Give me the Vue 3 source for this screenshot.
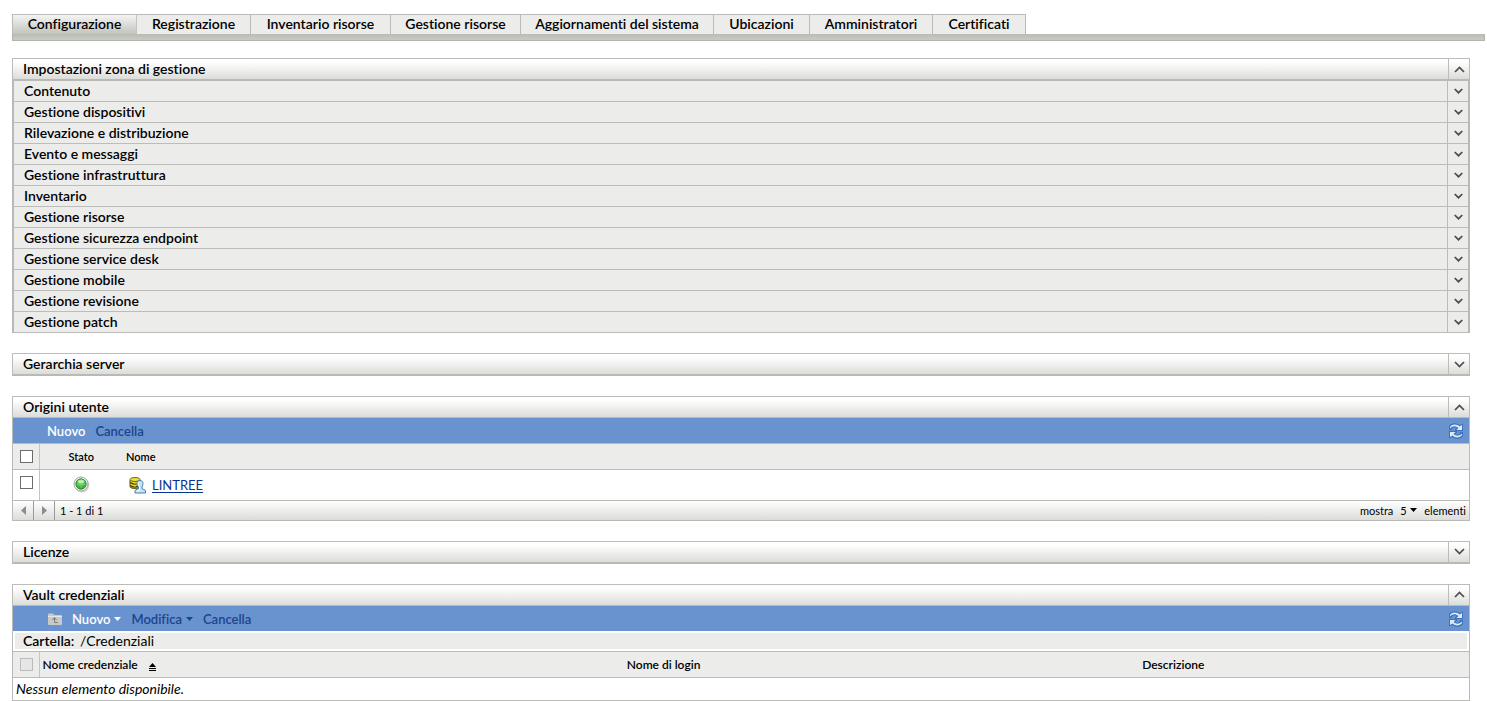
<script setup>
import { ref } from 'vue'

const tabs = [
  'Configurazione',
  'Registrazione',
  'Inventario risorse',
  'Gestione risorse',
  'Aggiornamenti del sistema',
  'Ubicazioni',
  'Amministratori',
  'Certificati',
]
const activeTab = ref('Configurazione')

const settings = [
  'Contenuto',
  'Gestione dispositivi',
  'Rilevazione e distribuzione',
  'Evento e messaggi',
  'Gestione infrastruttura',
  'Inventario',
  'Gestione risorse',
  'Gestione sicurezza endpoint',
  'Gestione service desk',
  'Gestione mobile',
  'Gestione revisione',
  'Gestione patch',
]
const pageSize = ref('5')
</script>

<template>
  <main class="page">
    <nav class="tabs" aria-label="Sezioni">
      <button
        v-for="tab in tabs"
        :key="tab"
        type="button"
        class="tab"
        :class="{ active: tab === activeTab }"
        @click="activeTab = tab"
      >{{ tab }}</button>
    </nav>
    <div class="tab-bar"></div>

    <div class="panels">
      <section>
        <header class="panel-head">
          <h2>Impostazioni zona di gestione</h2>
          <button type="button" class="toggle" aria-label="Comprimi">
            <svg width="11" height="7" viewBox="0 0 11 7"><path d="M1 6 5.500 1.500 10 6" /></svg>
          </button>
        </header>
        <ul class="settings">
          <li v-for="item in settings" :key="item">
            <h3>{{ item }}</h3>
            <button type="button" class="toggle" aria-label="Espandi">
              <svg width="9" height="6" viewBox="0 0 9 6"><path d="M.7 1 4.500 4.700 8.300 1" /></svg>
            </button>
          </li>
        </ul>
      </section>

      <section>
        <header class="panel-head">
          <h2>Gerarchia server</h2>
          <button type="button" class="toggle" aria-label="Espandi">
            <svg width="11" height="7" viewBox="0 0 11 7"><path d="M1 1 5.500 5.500 10 1" /></svg>
          </button>
        </header>
      </section>

      <section>
        <header class="panel-head open">
          <h2>Origini utente</h2>
          <button type="button" class="toggle" aria-label="Comprimi">
            <svg width="11" height="7" viewBox="0 0 11 7"><path d="M1 6 5.500 1.500 10 6" /></svg>
          </button>
        </header>
        <div class="panel-body">
          <div class="toolbar sources-bar">
            <button type="button" class="action enabled">Nuovo</button>
            <button type="button" class="action">Cancella</button>
            <button type="button" class="refresh" aria-label="Aggiorna">
              <svg width="14" height="16" viewBox="0 0 14 16">
                <path class="arrow-shade" d="M0 3C2-.5 8-.5 10.500 2L14 .5V8H6V6L8 5C6 3.500 3.500 4.500 2 7.500L0 7Z" />
                <path class="arrow" d="M1 4C3 .8 8 .8 10.500 3.500L13 2V7H7.500L9.500 5C6.500 2.500 3.500 3 1 5.500Z" />
                <path class="arrow-shade" d="M14 13C12 16.500 6 16.500 3.500 14L0 15.500V8H8V10L6 11C8 12.500 10.500 11.500 12 8.500L14 9Z" />
                <path class="arrow" d="M13 12C11 15.200 6 15.200 3.500 12.500L1 14V9H6.500L4.500 11C7.500 13.500 10.500 13 13 10.500Z" />
              </svg>
            </button>
          </div>
          <table class="grid sources">
            <thead>
              <tr>
                <th class="check"><input type="checkbox" aria-label="Seleziona tutto" /></th>
                <th class="state">Stato</th>
                <th class="name">Nome</th>
              </tr>
            </thead>
            <tbody>
              <tr>
                <td class="check"><input type="checkbox" aria-label="Seleziona LINTREE" /></td>
                <td class="state">
                  <svg width="17" height="17" viewBox="0 0 17 17" role="img" aria-label="Attivo">
                    <defs>
                      <radialGradient id="led" cx=".5" cy=".25" r=".75">
                        <stop offset="0" stop-color="#c4f5b8" />
                        <stop offset=".4" stop-color="#5fc85c" />
                        <stop offset="1" stop-color="#2fa035" />
                      </radialGradient>
                    </defs>
                    <circle cx="9" cy="9" r="7.500" fill="#d4d4d4" />
                    <circle cx="8" cy="8" r="7" fill="#fff" stroke="#9da39d" />
                    <circle cx="8" cy="8" r="5.200" fill="url(#led)" stroke="#2c9036" />
                    <ellipse cx="8" cy="5.500" rx="3" ry="1.500" fill="#d4f8cb" opacity=".8" />
                    <path d="M4 8.500h8M8 4v8" stroke="#8be57d" opacity=".5" />
                  </svg>
                </td>
                <td class="name">
                  <div class="source">
                    <svg width="17" height="17" viewBox="0 0 17 17" aria-hidden="true">
                      <path d="M1 3v7c1.500 2 9 2 10 0V3Z" fill="#c9b90c" stroke="#5a560f" />
                      <path d="M1.500 5.500c3 2 6 2 9 0M1.500 8.500c3 2 6 2 9 0" fill="none" stroke="#302f08" stroke-width="1.200" />
                      <path d="M2 4.500c2 1.500 4 1.700 6 1.500M2 7.500c2 1.500 4 1.500 5 1.400" fill="none" stroke="#f5eb3e" />
                      <ellipse cx="6" cy="2.500" rx="5" ry="2" fill="#eee33a" stroke="#70670b" />
                      <path d="M11 3.500C8 3.500 7.500 6 8.500 8.500L9.500 10V11.500L6 13.500V16H16.500V13.500L13 11.500V10C14.500 7 14.500 3.500 11 3.500Z" fill="#c5e2f8" stroke="#477fae" />
                      <path d="M9.500 5.500c-.8 1 0 3 1 4.500v3l-3 1.500" fill="none" stroke="#fff" />
                    </svg>
                    <a href="#lintree">LINTREE</a>
                  </div>
                </td>
              </tr>
            </tbody>
          </table>
          <footer class="pager">
            <button type="button" class="step" aria-label="Pagina precedente">
              <svg width="5" height="9" viewBox="0 0 5 9"><path d="M5 0v9L0 4.500Z" /></svg>
            </button>
            <button type="button" class="step" aria-label="Pagina successiva">
              <svg width="5" height="9" viewBox="0 0 5 9"><path d="M0 0v9L5 4.500Z" /></svg>
            </button>
            <span class="range">1 - 1 di 1</span>
            <label for="page-size">mostra</label>
            <span class="size">
              <select id="page-size" v-model="pageSize">
                <option>5</option>
                <option>10</option>
                <option>25</option>
              </select>
              <svg width="7" height="4" viewBox="0 0 7 4"><path d="M0 0h7L3.500 4Z" /></svg>
            </span>
            <span>elementi</span>
          </footer>
        </div>
      </section>

      <section>
        <header class="panel-head">
          <h2>Licenze</h2>
          <button type="button" class="toggle" aria-label="Espandi">
            <svg width="11" height="7" viewBox="0 0 11 7"><path d="M1 1 5.500 5.500 10 1" /></svg>
          </button>
        </header>
      </section>

      <section>
        <header class="panel-head open">
          <h2>Vault credenziali</h2>
          <button type="button" class="toggle" aria-label="Comprimi">
            <svg width="11" height="7" viewBox="0 0 11 7"><path d="M1 6 5.500 1.500 10 6" /></svg>
          </button>
        </header>
        <div class="panel-body">
          <div class="toolbar vault-bar">
            <button type="button" class="folder-up" aria-label="Cartella superiore">
              <svg width="14" height="12" viewBox="0 0 14 12">
                <path d="M0 1.500Q0 .5 1 .5H5L6.500 2H13Q14 2 14 3V11Q14 12 13 12H1Q0 12 0 11Z" fill="#c9c9c9" />
                <path d="M0 3.500H14" stroke="#e6e6e6" />
                <path d="M4.500 7 6.500 4.500 8.500 7M6.500 5V9.500H10" fill="none" stroke="#7d7d7d" />
              </svg>
            </button>
            <button type="button" class="action enabled">Nuovo<svg width="7" height="4" viewBox="0 0 7 4"><path d="M0 0h7L3.500 4Z" /></svg></button>
            <button type="button" class="action">Modifica<svg width="7" height="4" viewBox="0 0 7 4"><path d="M0 0h7L3.500 4Z" /></svg></button>
            <button type="button" class="action">Cancella</button>
            <button type="button" class="refresh" aria-label="Aggiorna">
              <svg width="14" height="16" viewBox="0 0 14 16">
                <path class="arrow-shade" d="M0 3C2-.5 8-.5 10.500 2L14 .5V8H6V6L8 5C6 3.500 3.500 4.500 2 7.500L0 7Z" />
                <path class="arrow" d="M1 4C3 .8 8 .8 10.500 3.500L13 2V7H7.500L9.500 5C6.500 2.500 3.500 3 1 5.500Z" />
                <path class="arrow-shade" d="M14 13C12 16.500 6 16.500 3.500 14L0 15.500V8H8V10L6 11C8 12.500 10.500 11.500 12 8.500L14 9Z" />
                <path class="arrow" d="M13 12C11 15.200 6 15.200 3.500 12.500L1 14V9H6.500L4.500 11C7.500 13.500 10.500 13 13 10.500Z" />
              </svg>
            </button>
          </div>
          <p class="folder"><strong>Cartella:</strong> <span>/Credenziali</span></p>
          <table class="grid vault">
            <thead>
              <tr>
                <th class="check"><input type="checkbox" disabled aria-label="Seleziona tutto" /></th>
                <th class="credential">
                  Nome credenziale
                  <svg width="7" height="8" viewBox="0 0 7 8" aria-hidden="true"><path d="M3.500 0 7 4H0ZM0 5h7v1H0ZM0 7h7v1H0Z" /></svg>
                </th>
                <th class="login">Nome di login</th>
                <th class="description">Descrizione</th>
              </tr>
            </thead>
            <tbody>
              <tr>
                <td class="empty" colspan="4">Nessun elemento disponibile.</td>
              </tr>
            </tbody>
          </table>
        </div>
      </section>
    </div>
  </main>
</template>

<style>
body {
  margin: 0;
  background: #fff;
}
</style>

<style scoped>
* {
  box-sizing: border-box;
}

.page {
  padding: 14px 2px 0 12px;
  font-family: Lato, "Open Sans", sans-serif;
  font-size: 14px;
  font-variant-ligatures: none;
  line-height: 16px;
  color: #000;
}

button,
select {
  margin: 0;
  padding: 0;
  border: 0;
  background: none;
  font: inherit;
  color: inherit;
  cursor: pointer;
}

svg {
  display: block;
  flex: none;
}

h2,
h3,
p,
ul {
  margin: 0;
  padding: 0;
}

.tabs {
  display: grid;
  grid-template-columns: 125px 114px 140px 130px 193px 96px 123px 93px;
  height: 20px;
}

.tab {
  padding-bottom: 2px;
  border: solid #b9bbb6;
  border-width: 1px 1px 0 0;
  background: #ececea;
  font-weight: 600;
  white-space: nowrap;
}

.tab.active {
  border-left-width: 1px;
  border-right-color: #c2c4bf;
  background: linear-gradient(#f4f4f2, #c2c4be);
}

.tab-bar {
  height: 7px;
  border: solid #b2b4ae;
  border-width: 0 1px 1px;
  background: linear-gradient(#b9bcb4, #c8cac5);
}

.panels {
  display: flex;
  flex-direction: column;
  gap: 20px;
  padding: 17px 15px 0 0;
}

.panel-head {
  display: flex;
  height: 23px;
  border: 1px solid #bcbdb9;
  border-bottom: 2px solid #b9bab6;
  background: linear-gradient(#fff 15%, #dcddd9);
}

.panel-head.open {
  height: 22px;
  border-bottom-width: 1px;
}

h2,
h3 {
  flex: 1;
  font-size: 14px;
  line-height: 20px;
  font-weight: 600;
  padding-left: 10px;
}

.toggle {
  display: flex;
  align-items: center;
  justify-content: center;
  width: 21px;
  border-left: 1px solid #bcbdb9;
}

.toggle path {
  fill: none;
  stroke: #4c4c4c;
  stroke-width: 1.7;
}

.settings {
  list-style: none;
  border: solid #b9bab6;
  border-width: 0 2px;
}

.settings li {
  display: flex;
  height: 21px;
  border-bottom: 1px solid #bcbdb9;
  background: #ececea;
}

.panel-body {
  border: solid #b9bbb6;
  border-width: 0 1px 1px;
}

.toolbar {
  display: flex;
  align-items: center;
  gap: 10px;
  height: 25px;
  padding: 1px 6px 0 34px;
  background: #6993cf;
}

.vault-bar {
  padding-left: 35px;
}

.action {
  display: flex;
  align-items: center;
  gap: 4px;
  font-size: 13px;
  line-height: 22px;
  font-weight: 600;
  color: #1b448c;
  fill: #1b448c;
}

.action.enabled {
  color: #fff;
  fill: #fff;
}

.refresh {
  margin-left: auto;
}

.arrow {
  fill: #dcecfa;
}

.arrow-shade {
  fill: #3f72bc;
}

.grid {
  width: 100%;
  border-collapse: collapse;
  table-layout: fixed;
}

th,
td {
  padding: 0;
  text-align: left;
}

th {
  height: 26px;
  border: solid #b9bbb6;
  border-width: 1px 0;
  background: #ececea;
  font-size: 11px;
  font-weight: 600;
}

.vault th {
  font-size: 12px;
}

.vault th:not(.check) {
  padding-top: 2px;
}

.check {
  width: 26px;
  border-right: 1px solid #c4c5c2;
  vertical-align: top;
  padding: 6px 0 0 7px;
}

input[type='checkbox'] {
  display: block;
  appearance: none;
  width: 13px;
  height: 13px;
  margin: 0;
  border: 1px solid #6c6c6c;
  background: #fff;
}

input[type='checkbox']:disabled {
  border-color: #bbb;
  background: #e6e6e6;
}

.state {
  width: 84px;
  text-align: center;
}

.sources td {
  height: 30px;
}

td.state svg {
  margin: 0 auto;
}

th.name {
  padding-left: 3px;
}

.source {
  display: flex;
  align-items: center;
  gap: 6px;
  padding: 1px 0 0 6px;
}

.source a {
  font-size: 13px;
  line-height: 18px;
  color: #073591;
  text-underline-offset: 2px;
}

.pager {
  display: flex;
  align-items: center;
  height: 20px;
  padding-right: 3px;
  border-top: 1px solid #b9bbb6;
  background: linear-gradient(#fff, #dcddd9);
  font-size: 11px;
  line-height: 19px;
}

.step {
  display: flex;
  align-items: center;
  justify-content: center;
  width: 21px;
  height: 19px;
  border-right: 1px solid #999b96;
  fill: #8c8c8c;
}

.range {
  flex: 1;
  padding-left: 5px;
}

.size {
  display: flex;
  align-items: center;
  gap: 3px;
  margin: 0 7px;
}

.size select {
  appearance: none;
  width: 7px;
  line-height: 19px;
}

.folder {
  margin: 2px;
  padding-left: 8px;
  background: #ececea;
}

.folder strong {
  margin-right: 2px;
  font-weight: 600;
}

.credential svg {
  display: inline-block;
  margin-left: 8px;
  vertical-align: -2px;
}

.vault .credential {
  width: 40.3%;
  padding-left: 3px;
}

.vault .login {
  width: 35.4%;
}

.vault .login,
.vault .description {
  padding-left: 1px;
}

.empty {
  height: 23px;
  padding-left: 3px;
  font-style: italic;
}
</style>
